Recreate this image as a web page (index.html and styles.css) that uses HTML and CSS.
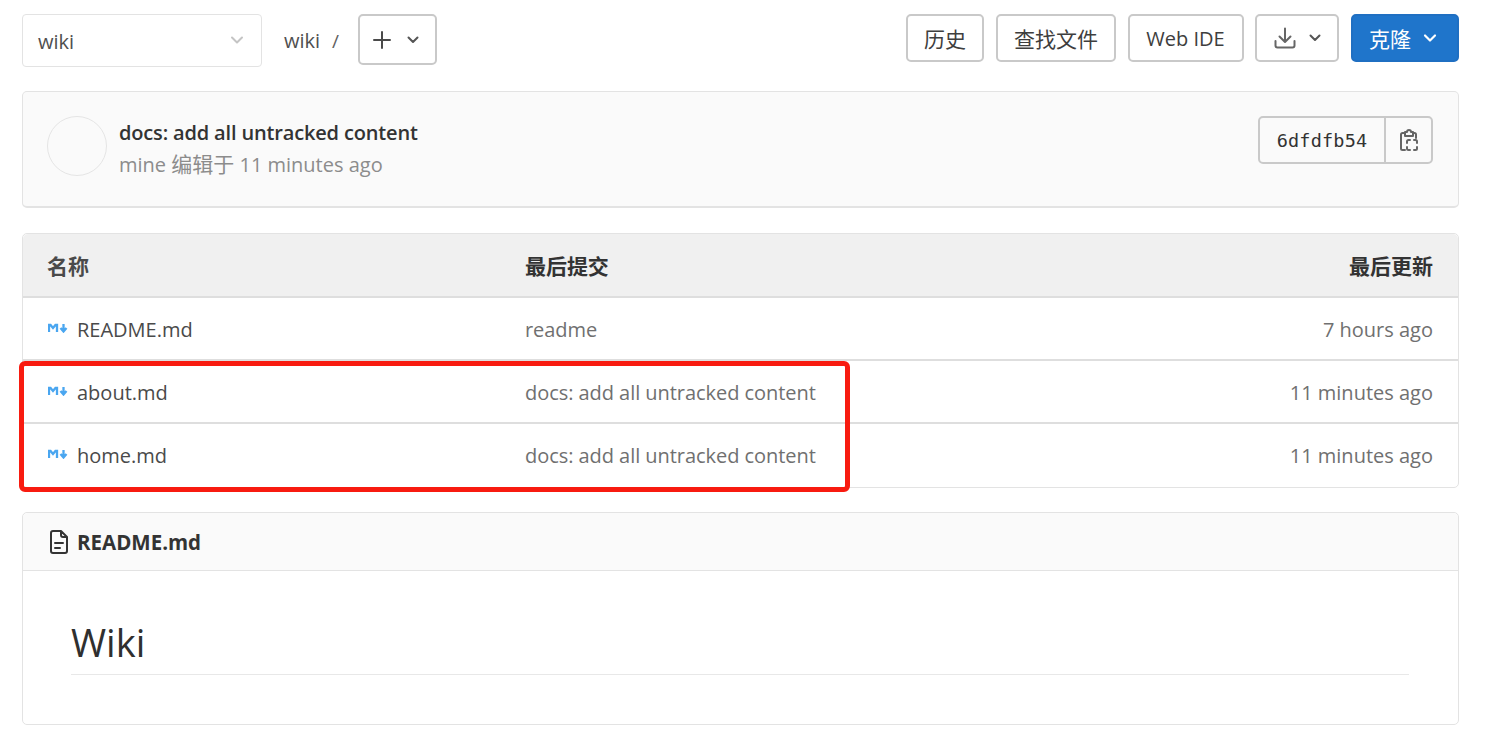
FILE: index.html
```html
<!DOCTYPE html>
<html lang="zh">
<head>
<meta charset="utf-8">
<title>wiki</title>
<link rel="stylesheet" href="styles.css">
</head>
<body>
<main class="page">
  <div class="toolbar">
    <div class="crumbs">
      <div class="select"><span>wiki</span>
        <svg class="chev light" viewBox="0 0 16 16"><path d="M3 5.500l5 5 5-5"/></svg>
      </div>
      <span class="path">wiki</span>
      <span class="slash">/</span>
      <button class="btn add">
        <svg class="plus" viewBox="0 0 20 20"><path d="M10 2v16M2 10h16"/></svg>
        <svg class="chev" viewBox="0 0 16 16"><path d="M3.500 5.500L8 10l4.500-4.500"/></svg>
      </button>
    </div>
    <div class="actions">
      <button class="btn w78 cjk">历史</button>
      <button class="btn w120 cjk">查找文件</button>
      <button class="btn w116">Web IDE</button>
      <button class="btn w84">
        <svg class="dl" viewBox="0 0 22 22"><path d="M11 1.500v13M5.500 9.500l5.500 5.500 5.500-5.500M1.500 14v4.500a2 2 0 0 0 2 2h15a2 2 0 0 0 2-2V14"/></svg>
        <svg class="chev" viewBox="0 0 16 16"><path d="M3.500 5.500L8 10l4.500-4.500"/></svg>
      </button>
      <button class="btn primary w108"><span class="cjk">克隆</span>
        <svg class="chev" viewBox="0 0 16 16"><path d="M3 5.500l5 5 5-5"/></svg>
      </button>
    </div>
  </div>

  <section class="commit">
    <div class="avatar"></div>
    <div class="commit-text">
      <div class="commit-title">docs: add all untracked content</div>
      <div class="commit-meta">mine <span class="cjk">编辑于</span> 11 minutes ago</div>
    </div>
    <div class="sha">
      <span class="sha-text">6dfdfb54</span>
      <span class="sha-copy">
        <svg viewBox="0 0 20 24"><path d="M6 4H3.500A1.500 1.500 0 0 0 2 5.500v14A1.500 1.500 0 0 0 3.500 21H6M14 4h1.500A1.500 1.500 0 0 1 17 5.500V9M6 3h2a2 2 0 0 1 4 0h2v4H6z"/><path d="M8 14v-1.500A1.500 1.500 0 0 1 9.500 11H11M15 11h1.500A1.500 1.500 0 0 1 18 12.500V14M18 18v1.500a1.500 1.500 0 0 1-1.500 1.500H15M11 21H9.500A1.500 1.500 0 0 1 8 19.500V18"/></svg>
      </span>
    </div>
  </section>

  <section class="files">
    <div class="row head cjk">
      <div class="c-name">名称</div>
      <div class="c-msg">最后提交</div>
      <div class="c-time">最后更新</div>
    </div>
    <div class="row">
      <div class="c-name"><svg class="md" viewBox="0 0 21 10"><path d="M1 9V2h1.500L5 5l2.500-3H9v7M15.500 1v7M12.500 5l3 3.500 3-3.500"/></svg>README.md</div>
      <div class="c-msg">readme</div>
      <div class="c-time">7 hours ago</div>
    </div>
    <div class="row">
      <div class="c-name"><svg class="md" viewBox="0 0 21 10"><path d="M1 9V2h1.500L5 5l2.500-3H9v7M15.500 1v7M12.500 5l3 3.500 3-3.500"/></svg>about.md</div>
      <div class="c-msg">docs: add all untracked content</div>
      <div class="c-time">11 minutes ago</div>
    </div>
    <div class="row">
      <div class="c-name"><svg class="md" viewBox="0 0 21 10"><path d="M1 9V2h1.500L5 5l2.500-3H9v7M15.500 1v7M12.500 5l3 3.500 3-3.500"/></svg>home.md</div>
      <div class="c-msg">docs: add all untracked content</div>
      <div class="c-time">11 minutes ago</div>
    </div>
    <span class="highlight"></span>
  </section>

  <section class="readme">
    <div class="readme-head">
      <svg class="doc" viewBox="0 0 18 24"><path d="M11 1H3a2 2 0 0 0-2 2v18a2 2 0 0 0 2 2h12a2 2 0 0 0 2-2V7zM11 1v4a2 2 0 0 0 2 2h4M5 13h8M5 18h5"/></svg>
      <strong>README.md</strong>
    </div>
    <div class="readme-body">
      <h1>Wiki</h1>
    </div>
  </section>
</main>
</body>
</html>
```
FILE: styles.css
```css
* { box-sizing: border-box; }
html, body { margin: 0; padding: 0; background: #fff; }
body {
  font-family: "Open Sans", "Noto Sans", "Noto Sans CJK SC", sans-serif;
  font-size: 20px;
  color: #4a4a4a;
  overflow: hidden;
}
.page { width: 1437px; margin-left: 22px; padding-top: 14px; }
.cjk { font-size: 21px; }

.toolbar { display: flex; justify-content: space-between; align-items: flex-start; height: 53px; }
.crumbs, .actions { display: flex; align-items: flex-start; }
.actions { gap: 12px; }

.select {
  width: 240px; height: 53px; padding: 2px 16px 0 15px;
  border: 1px solid #e3e3e3; border-radius: 4px;
  display: flex; align-items: center; justify-content: space-between;
  color: #4f4f4f;
}
.select .chev { margin-top: -3px; }
.path { margin-left: 22px; line-height: 54px; color: #4f4f4f; }
.slash { margin-left: 12px; margin-right: 19px; line-height: 54px; color: #5f5f5f; font-size: 19px; }

.btn {
  height: 48px; padding: 0; margin: 0;
  font: inherit; color: #3e3e3e;
  background: #fff; border: 2px solid #c9c9c9; border-radius: 5px;
  display: flex; align-items: center; justify-content: center;
}
.btn.cjk { font-size: 21px; }
.add { width: 79px; height: 51px; gap: 13px; padding-right: 2px; }
.w78 { width: 78px; }
.w120 { width: 120px; }
.w116 { width: 116px; padding-right: 1px; }
.w84 { width: 84px; gap: 11px; margin-left: -1px; padding-left: 2px; }
.w108 { width: 108px; gap: 11px; padding-right: 3px; }
.primary { background: #1f75cb; border-color: #1f6fc2; color: #fff; }

svg { fill: none; stroke: currentColor; stroke-linecap: round; stroke-linejoin: round; flex: none; }
.chev { width: 16px; height: 16px; stroke-width: 2; color: #555; }
.chev.light { color: #c4c4c4; }
.primary .chev { color: #fff; stroke-width: 2.200; }
.plus { width: 20px; height: 20px; stroke-width: 2; color: #4a4a4a; }
.dl { width: 22px; height: 22px; stroke-width: 2; color: #666; }

.commit {
  margin-top: 24px; height: 117px; padding: 24px 25px 0 24px;
  background: #fafafa; border: 1px solid #e3e3e3; border-bottom-width: 2px; border-radius: 5px;
  display: flex; align-items: flex-start;
}
.avatar { width: 60px; height: 60px; border-radius: 50%; border: 1px solid #e5e5e5; background: #fafafa; flex: none; }
.commit-text { margin-left: 12px; flex: 1; }
.commit-title { font-weight: 600; color: #333; line-height: 32px; margin-top: 1px; letter-spacing: -0.16px; }
.commit-meta { color: #8c8c8c; line-height: 30px; }
.sha {
  display: flex; height: 48px; width: 175px;
  border: 2px solid #c9c9c9; border-radius: 5px;
}
.sha-text {
  width: 126px; font-family: "DejaVu Sans Mono", monospace; font-size: 18.500px; letter-spacing: 0.200px;
  color: #333; display: flex; align-items: center; justify-content: center;
  border-right: 2px solid #c9c9c9;
}
.sha-copy { flex: 1; display: flex; align-items: center; justify-content: center; color: #666; }
.sha-copy svg { width: 20px; height: 24px; stroke-width: 2; margin-top: 1px; }

.files {
  position: relative;
  margin-top: 25px; height: 255px;
  border: 1px solid #e3e3e3; border-radius: 5px;
}
.row {
  display: flex; align-items: center; height: 63px; padding: 2px 25px 0 24px;
  border-bottom: 2px solid #dedede;
}
.row:last-of-type { border-bottom: 0; padding-top: 0; }
.row.head { height: 64px; padding-top: 0; background: #f0f0f0; border-radius: 5px 5px 0 0; font-weight: 700; color: #333; }
.row.head .c-msg, .row.head .c-time { color: #333; }
.c-name { width: 478px; display: flex; align-items: center; color: #4a4a4a; }
.c-msg { flex: 1; color: #707070; letter-spacing: -0.05px; }
.c-time { color: #707070; text-align: right; }
.md { width: 21px; height: 10px; margin: -3px 8px 0 1px; color: #4aa6f0; stroke-width: 2.300; stroke-linecap: butt; stroke-linejoin: miter; }

.highlight {
  display: block;
  position: absolute; left: -4px; top: 127px; width: 831px; height: 131px;
  border: 5px solid #f81b10; border-radius: 6px; pointer-events: none;
}

.readme {
  margin-top: 24px; height: 213px;
  border: 1px solid #e3e3e3; border-radius: 5px;
}
.readme-head {
  height: 58px; padding: 0 24px; display: flex; align-items: center; gap: 9px;
  background: #fafafa; border-bottom: 1px solid #e3e3e3; border-radius: 5px 5px 0 0;
  color: #333;
}
.readme-head strong { font-size: 20.500px; }
.doc { width: 18px; height: 24px; stroke-width: 2; color: #333; margin: 0 0 0 3px; }
.readme-body { padding: 43px 49px 0 48px; }
h1 {
  margin: 0; font-size: 38px; font-weight: 500; line-height: 56px; height: 61px;
  color: #2f2f2f; border-bottom: 1px solid #e8e8e8;
}
```
